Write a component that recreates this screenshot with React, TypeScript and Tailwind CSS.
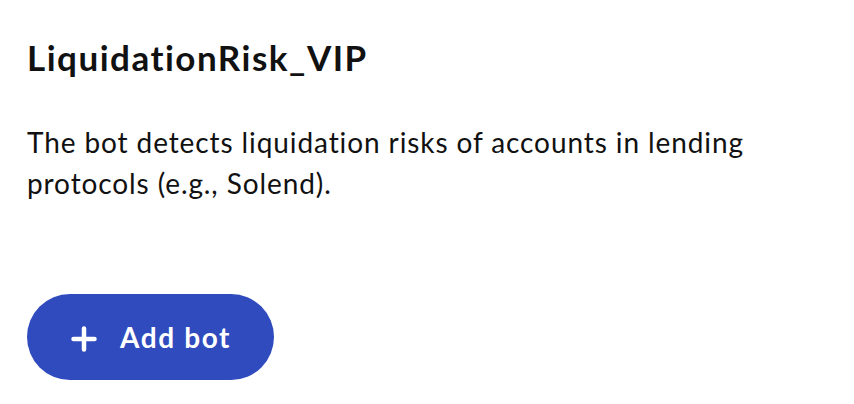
import React from 'react'

const PlusIcon = () => (
    <svg width="28" height="28" viewBox="0 0 28 28" fill="none">
        <path d="M14 3.5v21M3.5 14h21" stroke="white" strokeWidth="4.5" strokeLinecap="round" />
    </svg>
)

const App = () => {
    return (
        <div className="w-[854px] h-[404px] bg-white px-[27px] pt-[36px] font-['Lato',sans-serif] text-[#111111]">
            <h1 className="text-[35px] font-bold leading-[42px] tracking-[1.5px]">LiquidationRisk_VIP</h1>
            <p className="mt-[44px] text-[28px] leading-[41px] tracking-[0.9px] w-[780px]">
                The bot detects liquidation risks of accounts in lending protocols (e.g., Solend).
            </p>
            <button className="mt-[90px] h-[86px] w-[247px] rounded-full bg-[#2f4bbd] flex items-center pl-[43px] gap-[22px] text-white">
                <span className="pt-[4px]"><PlusIcon /></span>
                <span className="text-[28px] font-bold tracking-[1.6px]">Add bot</span>
            </button>
        </div>
    )
}

export default App
